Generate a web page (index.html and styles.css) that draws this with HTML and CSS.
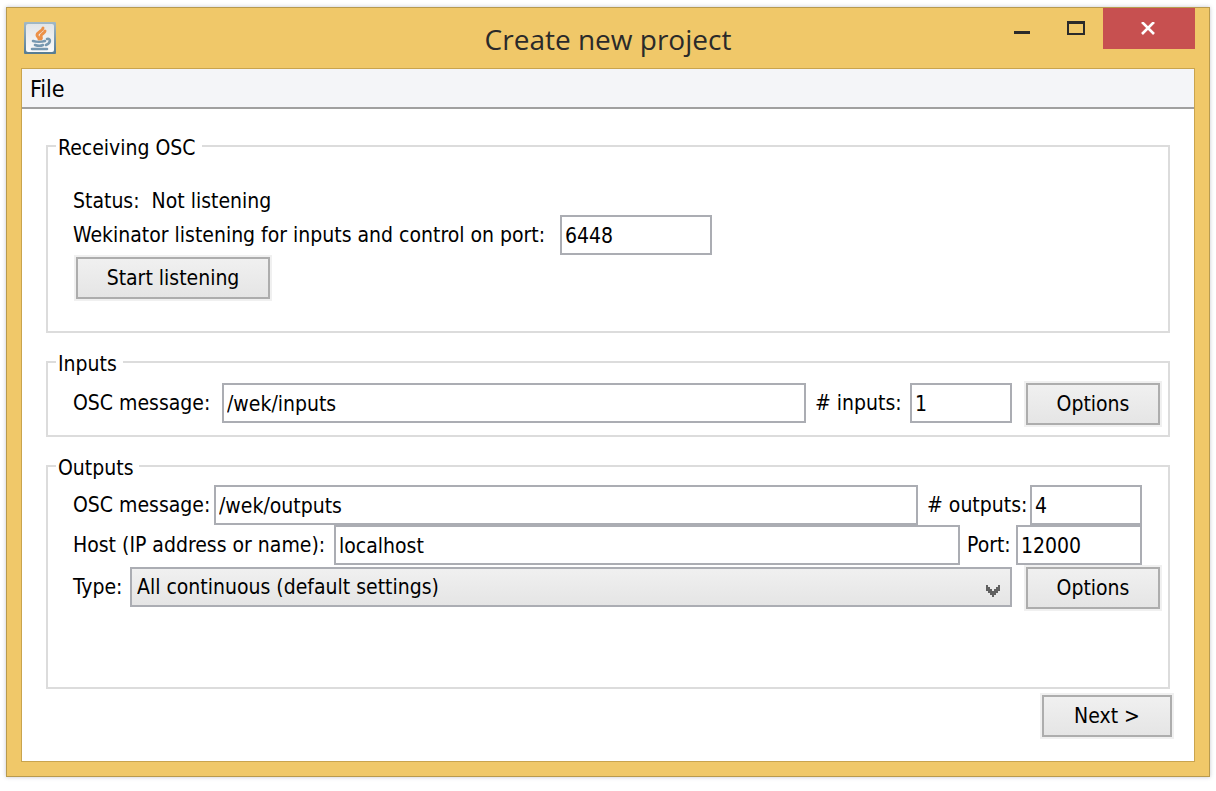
FILE: index.html
```html
<!DOCTYPE html>
<html lang="en">
<head>
<meta charset="utf-8">
<title>Create new project</title>
<link rel="stylesheet" href="styles.css">
</head>
<body>
<div class="window">
  <header class="titlebar">
    <svg class="app-icon" viewBox="0 0 32 32" aria-hidden="true">
      <defs>
        <linearGradient id="frame" x1="0" y1="0" x2="0" y2="1"><stop offset="0" stop-color="#a3b9c6"/><stop offset="1" stop-color="#567b92"/></linearGradient>
        <linearGradient id="face" x1="0" y1="0" x2="0" y2="1"><stop offset="0" stop-color="#e2e5e8"/><stop offset="1" stop-color="#fbfbfb"/></linearGradient>
      </defs>
      <rect width="32" height="32" rx="1" fill="url(#frame)"/>
      <rect x="2" y="2" width="28" height="28" rx="2" fill="url(#face)"/>
      <g fill="none" stroke-linecap="round">
        <path d="M19 6c0 3-6 4-6 7 0 2 2 2 2 4M21 9c0 2-4 3-4 5 0 1 1 2 0 3" stroke="#ec9148" stroke-width="3"/>
        <path d="M9 19c3 1 9 1 12 0M11 23c3 1 6 1 8 0M8 27h15M23 17c4-1 4 4-1 6" stroke="#7798b0" stroke-width="2.6"/>
      </g>
    </svg>
    <h1 class="title">Create new project</h1>
    <div class="window-controls">
      <button class="window-button" type="button" aria-label="Minimize"><svg width="16" height="14" viewBox="0 0 16 14"><path d="M0 10h16v3H0z" fill="#2a2a2a"/></svg></button>
      <button class="window-button" type="button" aria-label="Maximize"><svg width="18" height="14" viewBox="0 0 18 14"><path d="M0 0h18v14H0zM2 3v9h14V3z" fill="#2a2a2a" fill-rule="evenodd"/></svg></button>
      <button class="window-button close" type="button" aria-label="Close"><svg width="16" height="13" viewBox="0 0 16 13"><path d="M1 0l12 12M13 0L1 12" stroke="#fff" stroke-width="2.6"/></svg></button>
    </div>
  </header>
  <div class="client">
    <nav class="menubar"><button class="menu" type="button">File</button></nav>
    <form class="content">
      <fieldset class="group receiving">
        <legend>Receiving OSC</legend>
        <p class="status">Status:&nbsp; Not listening</p>
        <div class="row">
          <label class="label-listen" for="listen-port">Wekinator listening for inputs and control on port:</label>
          <input class="field field-listen" id="listen-port" type="text" value="6448">
        </div>
        <button class="button start" type="button">Start listening</button>
      </fieldset>
      <fieldset class="group inputs">
        <legend>Inputs</legend>
        <div class="row has-button">
          <label class="label-in" for="in-message">OSC message:</label>
          <input class="field grow" id="in-message" type="text" value="/wek/inputs">
          <label class="label-in-count" for="in-count"># inputs:</label>
          <input class="field field-in-count" id="in-count" type="text" value="1">
          <button class="button options" type="button">Options</button>
        </div>
      </fieldset>
      <fieldset class="group outputs">
        <legend>Outputs</legend>
        <div class="row inset">
          <label class="label-out" for="out-message">OSC message:</label>
          <input class="field grow" id="out-message" type="text" value="/wek/outputs">
          <label class="label-out-count" for="out-count"># outputs:</label>
          <input class="field field-out-count" id="out-count" type="text" value="4">
        </div>
        <div class="row inset">
          <label class="label-host" for="host">Host (IP address or name):</label>
          <input class="field grow" id="host" type="text" value="localhost">
          <label class="label-port" for="out-port">Port:</label>
          <input class="field field-port" id="out-port" type="text" value="12000">
        </div>
        <div class="row has-button">
          <label class="label-type" for="type">Type:</label>
          <div class="select-wrap grow">
            <select class="select" id="type"><option>All continuous (default settings)</option></select>
            <svg class="arrow" width="14" height="12" viewBox="0 0 14 12" aria-hidden="true"><path d="M0 0h2v2h2v2h2v2h2V4h2V2h2V0h2v6h-2v2h-2v2H8v2H6v-2H4V8H2V6H0z" fill="#606060"/></svg>
          </div>
          <button class="button options" type="button">Options</button>
        </div>
      </fieldset>
    </form>
    <footer class="actions"><button class="button next" type="button">Next &gt;</button></footer>
  </div>
</div>
</body>
</html>
```
FILE: styles.css
```css
* { box-sizing: border-box; }

body {
  margin: 0;
  min-height: 100vh;
  padding: 7px 6px 14px;
  display: flex;
  background: #fff;
  color: #000;
  font: 21px/28px "DejaVu Sans Condensed", "DejaVu Sans", sans-serif;
  font-stretch: condensed;
}

button, input, select { font: inherit; color: inherit; margin: 0; }

.window {
  flex: 1;
  display: flex;
  flex-direction: column;
  min-width: 0;
  padding: 0 14px 14px;
  border: 1px solid #b89a4e;
  background: #f0c869;
  box-shadow: 0 0 4px rgba(60, 60, 90, 0.3);
}

.titlebar {
  display: grid;
  grid-template-columns: 1fr auto 1fr;
  height: 60px;
}

.app-icon { width: 32px; height: 32px; margin: 14px 0 0 3px; }

.title {
  margin: 0;
  padding-top: 11px;
  font: 400 28px/40px "Open Sans", "Noto Sans", sans-serif;
  color: #2a2a2a;
}

.window-controls { display: flex; justify-content: flex-end; align-items: flex-start; }

.window-button {
  display: grid;
  place-items: center;
  width: 54px;
  height: 40px;
  padding: 0;
  border: 0;
  background: none;
}

.close { width: 92px; height: 41px; background: #c75050; }

.client {
  flex: 1;
  display: flex;
  flex-direction: column;
  border: 1px solid #c9a44e;
  background: #fff;
}

.menubar {
  display: flex;
  height: 40px;
  border-bottom: 2px solid #a0a0a0;
  background: #f4f5f8;
}

.menu { padding: 2px 8px 0; border: 0; background: none; font-size: 23px; }

.content {
  flex: 1;
  display: flex;
  flex-direction: column;
  gap: 15px;
  padding: 23px 24px 4px;
}

.group {
  min-width: 0;
  margin: 0;
  padding: 0 6px 8px 25px;
  border: 2px solid #dcdcdc;
}

.group legend {
  margin-left: -17px;
  padding: 4px 6px 0 2px;
  line-height: 24px;
}

.receiving { padding-top: 28px; padding-bottom: 30px; }
.inputs, .outputs { padding-top: 5px; }
.outputs { flex: 1; }

.status { margin: 0; line-height: 27px; }

.row { display: flex; align-items: flex-start; }
.row label { flex: none; height: 40px; line-height: 41px; white-space: nowrap; }
.has-button .field, .has-button label, .has-button .select-wrap { margin-top: 2px; }
.inset { padding-right: 20px; }
.grow { flex: 1; min-width: 0; }

.field {
  height: 40px;
  padding: 2px 3px 0;
  border: 2px solid #abadb3;
  border-radius: 0;
  background: #fff;
}

.label-listen { width: 487px; }
.field-listen { width: 152px; }
.label-in { width: 149px; }
.label-in-count { width: 104px; padding-left: 9px; }
.field-in-count { width: 102px; }
.label-out { width: 141px; }
.label-out-count { width: 112px; padding-left: 9px; }
.field-out-count { width: 112px; }
.label-host { width: 261px; }
.label-port { width: 56px; padding-left: 7px; }
.field-port { width: 126px; }
.label-type { width: 57px; }

.select-wrap { position: relative; }

.select {
  display: block;
  width: 100%;
  height: 40px;
  padding: 0 30px 0 5px;
  border: 2px solid #abadb3;
  border-radius: 0;
  background: linear-gradient(#f0f0f0, #e5e5e5);
  appearance: none;
}

.arrow { position: absolute; right: 12px; top: 18px; pointer-events: none; }

.button {
  display: block;
  height: 42px;
  margin: 2px;
  padding: 0;
  border: 2px solid #adadad;
  border-radius: 0;
  background: linear-gradient(#f0f0f0, #e5e5e5);
  box-shadow: 0 0 0 2px #f0f0f0;
}

.start { width: 194px; margin-left: 3px; }
.options { width: 134px; margin-left: 14px; }
.next { width: 130px; }

.actions { display: flex; justify-content: flex-end; padding: 0 20px 22px; }
```
